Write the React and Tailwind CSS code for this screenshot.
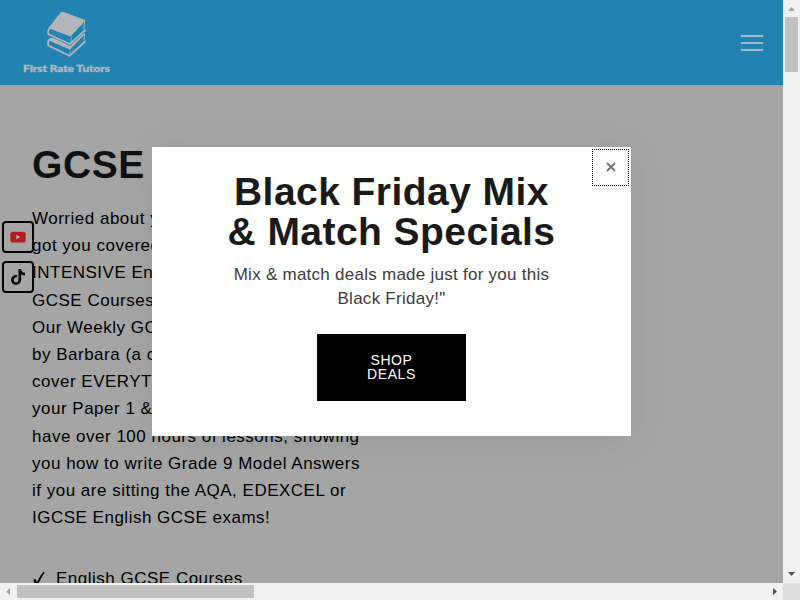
const lines = [
  "Worried about your",
  "got you covered!",
  "INTENSIVE English",
  "GCSE Courses",
  "Our Weekly GCSE",
  "by Barbara (a current",
  "cover EVERYTHING",
  "your Paper 1 & 2",
  "have over 100 hours of lessons, showing",
  "you how to write Grade 9 Model Answers",
  "if you are sitting the AQA, EDEXCEL or",
  "IGCSE English GCSE exams!",
];

function Logo() {
  return (
    <svg width="96" height="70" viewBox="19 8 96 70" className="block">
      <g fill="none" stroke="#b3b5b8" strokeWidth="1.7" strokeLinejoin="round" strokeLinecap="round">
        <path d="M49.500 28.300 Q47.300 30.500 48.300 34.200 L70 44 L85.200 30.200" />
        <path d="M84.500 21.500 L84 29" strokeWidth="1" />
        <path d="M71.300 37 L71.100 42.500" strokeWidth="0.600" />
        <path d="M49.500 39.500 Q47.300 41.500 48.300 45.600 L69.500 55.800 L85.200 41.300" />
        <path d="M84.500 34 L84 40" strokeWidth="1" />
        <path d="M70 48.500 L69.700 54" strokeWidth="0.600" />
      </g>
      <path d="M60.800 12.200 Q62.800 11.600 64.500 12.300 L85.800 20.300 L70.500 36.500 L48.300 28.200Z" fill="#b3b5b8" />
      <path d="M50 37.800 L54 38.200 L70.300 45.900 L82.500 34.300 L85.800 33.300 L69.800 49.400 L48.300 40.300Z" fill="#b3b5b8" />
      <text x="23" y="72" className="font-['Lato',sans-serif] font-black" fontSize="9.800" fill="#b3b5b8" stroke="#b3b5b8" strokeWidth="0.400" textLength="87" lengthAdjust="spacingAndGlyphs">First Rate Tutors</text>
    </svg>
  );
}

function SocialLinks() {
  return (
    <div className="absolute left-[2px] top-[221px] flex flex-col gap-2">
      <div className="flex h-8 w-8 items-center justify-center rounded border-2 border-black">
        <svg width="16" height="12" viewBox="0 0 16 12">
          <rect x="0.300" y="0.700" width="15.400" height="10.800" rx="2.500" fill="#ad1f20" />
          <path d="M6.300 3.700 L10.300 6.100 L6.300 8.400Z" fill="#b5a5a5" />
        </svg>
      </div>
      <div className="flex h-8 w-8 items-center justify-center rounded border-2 border-black">
        <svg width="14" height="16" viewBox="0 0 448 512" fill="#080808">
          <path d="M448,209.910a210.060,210.060,0,0,1-122.770-39.250V349.380A162.550,162.550,0,1,1,185,188.310V278.200a74.620,74.620,0,1,0,52.230,71.180V0l88,0a121.180,121.180,0,0,0,1.860,22.170h0A122.180,122.180,0,0,0,381,102.390a121.430,121.430,0,0,0,67,20.140Z" />
        </svg>
      </div>
    </div>
  );
}

function Modal() {
  return (
    <div className="absolute left-[152px] top-[147px] flex h-[289px] w-[479px] flex-col items-center bg-white pt-[25px] text-center shadow-[0_5px_35px_rgba(0,0,0,0.08)]">
      <h2 className="whitespace-nowrap text-[39px] font-bold leading-10 tracking-[0.45px] text-[#1a1a1a]">
        Black Friday Mix<br />&amp; Match Specials
      </h2>
      <p className="mt-[11px] whitespace-nowrap text-[17px] leading-6 tracking-[0.26px] text-[#3c3c3c]">
        Mix &amp; match deals made just for you this<br />Black Friday!"
      </p>
      <button className="mt-[23px] h-[67px] w-[149px] bg-black pb-[2px] text-[14px] leading-[14px] tracking-[0.6px] text-white">
        SHOP<br />DEALS
      </button>
      <button className="absolute right-[2px] top-[2px] flex h-[37px] w-[37px] items-center justify-center border border-dotted border-black pb-[2px]" aria-label="Close">
        <svg width="10" height="10" viewBox="0 0 10 10" stroke="#777" strokeWidth="2">
          <path d="M1 1 L9 9 M9 1 L1 9" />
        </svg>
      </button>
    </div>
  );
}

export default function App() {
  return (
    <div className="relative grid h-[600px] w-[800px] grid-cols-[783px_17px] grid-rows-[583px_17px] overflow-hidden font-['Liberation_Sans',Arial,sans-serif]">
      <div className="overflow-hidden bg-[#a5a5a5]">
        <header className="flex h-[85px] items-center justify-between bg-[#2283b1] pl-[19px] pr-5">
          <Logo />
          <div className="flex w-[22px] flex-col gap-[5px]">
            <span className="h-[2px] bg-[#a5bac4]" />
            <span className="h-[2px] bg-[#a5bac4]" />
            <span className="h-[2px] bg-[#a5bac4]" />
          </div>
        </header>
        <main className="pl-8 pt-[60px]">
          <h1 className="text-[39px] font-bold leading-10 tracking-[0.6px] text-[#111]">GCSE</h1>
          <div className="mt-5 whitespace-nowrap text-[17px] leading-[27.200px] tracking-[0.500px] text-black">
            {lines.map((line) => <p key={line}>{line}</p>)}
            <p className="mt-[34px] flex">
              <svg width="24" height="27" viewBox="0 0 24 27">
                <path d="M1 15 L3.300 13.800 L5 17 Q8 10.500 11.300 7 L12.700 7.500 Q8.500 13 5.700 20.500 L3.800 20.500Z" fill="black" />
              </svg>
              English GCSE Courses
            </p>
          </div>
        </main>
      </div>
      <div className="flex flex-col items-center justify-between bg-[#f1f1f1]">
        <svg width="17" height="17"><path d="M5 11 L8.500 7 L12 11Z" fill="#a3a3a3" /></svg>
        <div className="mb-auto h-[55px] w-[13px] bg-[#c1c1c1]" />
        <svg width="17" height="17"><path d="M5 6 L12 6 L8.500 10Z" fill="#505050" /></svg>
      </div>
      <div className="flex items-center bg-[#f1f1f1]">
        <svg width="17" height="17"><path d="M10 5 L6 8.500 L10 12Z" fill="#a3a3a3" /></svg>
        <div className="mr-auto h-[13px] w-[237px] bg-[#c1c1c1]" />
        <svg width="17" height="17"><path d="M7 5 L11 8.500 L7 12Z" fill="#505050" /></svg>
      </div>
      <div className="bg-[#dcdcdc]" />
      <SocialLinks />
      <Modal />
    </div>
  );
}
